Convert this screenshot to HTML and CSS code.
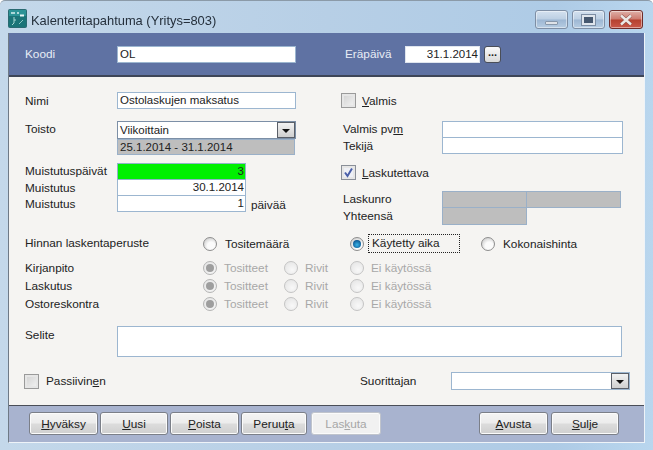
FILE: index.html
```html
<!DOCTYPE html>
<html lang="fi">
<head>
<meta charset="utf-8">
<title>Kalenteritapahtuma</title>
<link rel="stylesheet" href="styles.css">
</head>
<body>
<div class="window">
  <div class="titlebar">
    <svg class="app-icon" width="19" height="19" viewBox="0 0 19 19">
      <rect x="0.5" y="0.5" width="18" height="18" rx="1" fill="#1b7478" stroke="#2a6a72"/>
      <rect x="1" y="1" width="17" height="6" fill="#2d9396"/>
      <path d="M3 4h4M9 4h2" stroke="#d8f0f0" stroke-width="1.4" fill="none"/>
      <path d="M12 6.5h4" stroke="#e8f6f6" stroke-width="2" fill="none"/>
      <path d="M6 8v6l-2 2M6 11h2" stroke="#a9d8d4" fill="none"/>
      <path d="M11 15l4-4" stroke="#8cc8c4" fill="none"/>
    </svg>
    <span class="title">Kalenteritapahtuma (Yritys=803)</span>
    <div class="caption-buttons">
      <div class="cap cap-min"><span class="glyph-min"></span></div>
      <div class="cap cap-max"><span class="glyph-max"></span></div>
      <div class="cap cap-close">
        <svg width="16" height="12" viewBox="0 0 16 12"><path d="M3 1.5l10 9M13 1.5l-10 9" stroke="#8a4a44" stroke-width="3.6" fill="none"/><path d="M3 1.5l10 9M13 1.5l-10 9" stroke="#ece8e6" stroke-width="2.4" fill="none"/></svg>
      </div>
    </div>
  </div>

  <div class="client">
    <div class="header">
      <span class="h-label koodi-label">Koodi</span>
      <div class="field koodi">OL</div>
      <span class="h-label era-label">Eräpäivä</span>
      <div class="field era">31.1.2014</div>
      <div class="dots">...</div>
    </div>

    <div class="form">
      <div class="top">
        <div class="col-left">
          <div class="row nimi-row">
            <span class="label">Nimi</span>
            <div class="field wide">Ostolaskujen maksatus</div>
          </div>
          <div class="row toisto-row">
            <span class="label">Toisto</span>
            <div class="stack">
              <div class="field wide combo"><span class="combo-text">Viikoittain</span><span class="arrow"></span></div>
              <div class="field wide grey range">25.1.2014 - 31.1.2014</div>
            </div>
          </div>
          <div class="remind">
            <div class="row"><span class="label">Muistutuspäivät</span><div class="field num green">3</div></div>
            <div class="row"><span class="label">Muistutus</span><div class="field num joined">30.1.2014</div></div>
            <div class="row"><span class="label">Muistutus</span><div class="field num joined">1</div><span class="unit">päivää</span></div>
          </div>
        </div>
        <div class="col-right">
          <div class="check-row"><span class="check"></span><span class="check-label"><u>V</u>almis</span></div>
          <div class="pair valmis-pair">
            <div class="row"><span class="label-r">Valmis pv<u>m</u></span><div class="field rfield"></div></div>
            <div class="row"><span class="label-r">Tekijä</span><div class="field rfield joined"></div></div>
          </div>
          <div class="check-row lasku-check"><span class="check checked"><svg width="11" height="11" viewBox="0 0 11 11"><path d="M2 5.5l2.5 3.5L9 1.5" stroke="#4a5fa8" stroke-width="2" fill="none"/></svg></span><span class="check-label"><u>L</u>askutettava</span></div>
          <div class="pair lasku-pair">
            <div class="row"><span class="label-r">Laskunro</span><div class="field g1 grey"></div><div class="field g2 grey"></div></div>
            <div class="row"><span class="label-r">Yhteensä</span><div class="field g1 grey tall-joined"></div></div>
          </div>
        </div>
      </div>

      <div class="options">
        <span class="label">Hinnan laskentaperuste</span>
        <div class="opt span2"><span class="radio"></span><span>Tositemäärä</span></div>
        <div class="opt"><span class="radio on"></span><span class="focus">Käytetty aika</span></div>
        <div class="opt"><span class="radio"></span><span>Kokonaishinta</span></div>
      </div>

      <div class="options disabled-rows">
        <span class="label">Kirjanpito</span>
        <div class="opt off"><span class="radio dis sel"></span><span>Tositteet</span></div>
        <div class="opt off"><span class="radio dis"></span><span>Rivit</span></div>
        <div class="opt off"><span class="radio dis"></span><span>Ei käytössä</span></div>
        <span class="label">Laskutus</span>
        <div class="opt off"><span class="radio dis sel"></span><span>Tositteet</span></div>
        <div class="opt off"><span class="radio dis"></span><span>Rivit</span></div>
        <div class="opt off"><span class="radio dis"></span><span>Ei käytössä</span></div>
        <span class="label">Ostoreskontra</span>
        <div class="opt off"><span class="radio dis sel"></span><span>Tositteet</span></div>
        <div class="opt off"><span class="radio dis"></span><span>Rivit</span></div>
        <div class="opt off"><span class="radio dis"></span><span>Ei käytössä</span></div>
      </div>

      <div class="row selite-row">
        <span class="label">Selite</span>
        <div class="field selite"></div>
      </div>

      <div class="bottom-row">
        <span class="check"></span><span class="check-label passiivinen">Passiivin<u>e</u>n</span>
        <span class="suor-label">Suorittajan</span>
        <div class="field combo suor"><span class="combo-text"></span><span class="arrow"></span></div>
      </div>
    </div>

    <div class="footer">
      <button class="btn w69"><u>H</u>yväksy</button>
      <button class="btn w68"><u>U</u>usi</button>
      <button class="btn w69"><u>P</u>oista</button>
      <button class="btn w66">Peruu<u>t</u>a</button>
      <button class="btn off-btn">Las<u>k</u>uta</button>
      <span class="spacer"></span>
      <button class="btn w69"><u>A</u>vusta</button>
      <button class="btn w68 last"><u>S</u>ulje</button>
    </div>
  </div>
</div>
</body>
</html>
```

FILE: styles.css
```css
* { box-sizing: border-box; }
html, body { margin: 0; padding: 0; }
body {
  width: 653px;
  height: 450px;
  overflow: hidden;
  font-family: "Liberation Sans", Arial, sans-serif;
  font-size: 11.8px;
  color: #222;
}
u { text-decoration: underline; text-underline-offset: 1px; }

.window {
  width: 653px;
  height: 450px;
  display: flex;
  flex-direction: column;
  background: linear-gradient(90deg, #c4d8ea 0%, #b7cfe6 50%, #aecbe6 85%, #b9d6ee 100%);
  border-top: 1px solid #8b9aa8;
  border-radius: 5px 5px 0 0;
  padding: 0 0 7px 8px;
  filter: blur(0.35px);
}

.titlebar {
  height: 32px;
  flex: none;
  display: flex;
  align-items: flex-start;
  padding-right: 10px;
}
.app-icon { margin-top: 8px; flex: none; }
.title { margin: 12px 0 0 4px; font-size: 12.9px; color: #25303c; }
.caption-buttons { margin-left: auto; display: flex; gap: 4px; padding-top: 9px; }
.cap {
  height: 19px;
  width: 33px;
  border: 1px solid #7e8ea4;
  border-radius: 3px;
  display: flex;
  align-items: center;
  justify-content: center;
  background: linear-gradient(#d4e1ef 0%, #bccfe3 48%, #9db7d3 52%, #b6cce2 100%);
  box-shadow: inset 0 0 0 1px rgba(255, 255, 255, 0.45);
}
.cap-close {
  width: 34px;
  border-color: #6f2c2a;
  background: linear-gradient(#dfb0a8 0%, #cd7a6e 48%, #b5402f 52%, #c9584a 100%);
}
.glyph-min { width: 13px; height: 4px; margin-top: 6px; background: #dfe3e8; border: 1px solid #8797aa; border-radius: 1px; }
.glyph-max { width: 13px; height: 10px; background: #46586f; border: 2px solid #dfe5ec; outline: 1px solid #7d8ea4; }

.client {
  flex: 1;
  min-height: 0;
  width: 637px;
  display: flex;
  flex-direction: column;
  border-left: 1px solid #6f7a86;
  border-right: 1px solid #eef3f8;
  border-bottom: 1px solid #eef3f8;
  background: #f5f4f2;
}

.header {
  height: 44px;
  flex: none;
  display: flex;
  align-items: flex-start;
  background: #5f72a3;
  border-bottom: 2px solid #3e4658;
  padding: 13px 0 0 16px;
}
.h-label { color: #e9edf5; line-height: 17px; }
.koodi-label { width: 92px; }
.era-label { margin-left: 49px; width: 60px; }

.field {
  height: 17px;
  line-height: 15px;
  font-size: 11.5px;
  background: #fff;
  border: 1px solid #9cb6d0;
  padding: 0 2px;
  color: #222;
  white-space: nowrap;
  flex: none;
}
.koodi { width: 179px; }
.era { width: 75px; text-align: right; padding-right: 1px; border-color: #dfe5ee; }
.dots {
  width: 17px;
  height: 17px;
  margin-left: 4px;
  background: linear-gradient(#fafafa, #d9d9d9);
  border: 1px solid #4a4e58;
  border-radius: 3px;
  font-weight: bold;
  line-height: 10px;
  text-align: center;
  font-size: 11px;
  color: #222;
}

.form {
  flex: 1;
  min-height: 0;
  padding: 15px 0 0 16px;
  display: flex;
  flex-direction: column;
}
.top { display: flex; height: 134px; flex: none; }
.col-left { width: 316px; flex: none; }
.col-right { flex: 1; }

.row { display: flex; align-items: flex-start; }
.label { width: 92px; flex: none; line-height: 17px; white-space: nowrap; }
.nimi-row { height: 17px; }
.nimi-row .label { line-height: 18px; }
.wide { width: 179px; }
.toisto-row { margin-top: 12px; }
.stack { display: flex; flex-direction: column; }
.combo {
  display: flex;
  align-items: flex-start;
  padding: 0 0 0 2px;
  border-color: #7c8fa6;
  height: 18px;
}
.combo-text { flex: 1; line-height: 16px; }
.arrow {
  width: 18px;
  height: 16px;
  background: linear-gradient(#f2f2f2, #cfcfcf);
  border: 1px solid #5a5f68;
  position: relative;
  flex: none;
}
.arrow::after {
  content: "";
  position: absolute;
  left: 4px;
  top: 6px;
  border-left: 4px solid transparent;
  border-right: 4px solid transparent;
  border-top: 4px solid #111;
}
.grey { background: #bebebe; border-color: #9ab0c8; }
.range { height: 16px; line-height: 15px; width: 178px; }
.remind { margin-top: 8px; }
.remind .label { line-height: 16px; }
.num { width: 129px; text-align: right; padding-right: 1px; }
.green { background: #00f000; border-color: #8fb4c8; }
.joined { border-top-width: 0; height: 16px; }
.tall-joined { border-top-width: 0; height: 17px; }
.unit { margin-left: 5px; line-height: 18px; }

.check-row { display: flex; align-items: center; height: 17px; }
.check {
  width: 15px;
  height: 15px;
  flex: none;
  display: flex;
  align-items: center;
  justify-content: center;
  border: 1px solid #9a9a9a;
  background: linear-gradient(135deg, #d0d0d0, #f4f4f4);
  box-shadow: inset 0 0 0 2px #e6e6e6;
}
.check.checked { background: #eef0f6; border-color: #8a8f98; }
.check-label { margin-left: 6px; line-height: 18px; }
.label-r { width: 99px; margin-left: 2px; flex: none; line-height: 17px; }
.valmis-pair { margin-top: 12px; }
.rfield { width: 181px; }
.lasku-check { margin-top: 9px; }
.lasku-pair { margin-top: 10px; }
.g1 { width: 85px; }
.g2 { width: 94px; border-left: 0; }

.options {
  display: grid;
  grid-template-columns: 178px 81px 66px 131px auto;
  align-items: center;
  margin-top: 9px;
  grid-auto-rows: 17px;
}
.span2 { grid-column: span 2; }
.disabled-rows {
  grid-template-columns: 178px 81px 66px auto;
  grid-auto-rows: 18px;
  margin-top: 7px;
}
.opt { display: flex; align-items: center; gap: 8px; white-space: nowrap; }
.off { color: #a8a8a8; gap: 7px; }
.focus { outline: 1px dotted #222; width: 90px; height: 17px; line-height: 17px; margin-left: -3px; padding-left: 3px; }
.radio {
  width: 14px;
  height: 14px;
  border-radius: 50%;
  flex: none;
  border: 1px solid #8e8e8e;
  background: radial-gradient(circle at 60% 65%, #fbfbfb 0 35%, #cfcfcf 80%);
  position: relative;
}
.radio.on::after, .radio.sel::after {
  content: "";
  position: absolute;
  left: 2px;
  top: 2px;
  width: 8px;
  height: 8px;
  border-radius: 50%;
}
.radio.on::after { background: radial-gradient(circle at 50% 60%, #39b4e8, #0a4f8a 80%); }
.radio.dis { border-color: #c4c4c4; background: radial-gradient(circle at 60% 65%, #f8f8f8, #e2e2e2); }
.radio.sel { border-color: #b4b4b4; }
.radio.sel::after { background: #9e9e9e; }

.selite-row { margin-top: 13px; }
.selite { width: 505px; height: 31px; }
.selite-row .label { line-height: 18px; }

.bottom-row { display: flex; align-items: center; margin-top: 15px; height: 18px; }
.bottom-row .check { margin-left: -1px; }
.passiivinen { width: 314px; margin-left: 7px; white-space: nowrap; }
.suor-label { width: 91px; }
.suor { width: 179px; border-color: #9cb6d0; }

.footer {
  height: 37px;
  flex: none;
  display: flex;
  align-items: flex-start;
  gap: 2px;
  padding: 6px 0 0 20px;
  background: #a8b3cf;
  border-top: 1px solid #4a4e58;
}
.btn {
  height: 23px;
  padding: 0;
  font: inherit;
  color: #222;
  border: 1px solid #7b7f88;
  border-radius: 3px;
  background: linear-gradient(#f4f4f4 0%, #ececec 48%, #dcdcdc 52%, #cfcfcf 100%);
  box-shadow: inset 0 0 0 1px #fbfbfb;
  flex: none;
}
.w69 { width: 69px; }
.w68 { width: 68px; }
.w66 { width: 66px; }
.off-btn {
  color: #a6a6a6;
  width: 70px;
  margin-left: 2px;
  background: #f1f1f1;
  border-color: #c0c4cc;
}
.spacer { width: 94px; flex: none; }
.last { margin-left: 1px; }
```
